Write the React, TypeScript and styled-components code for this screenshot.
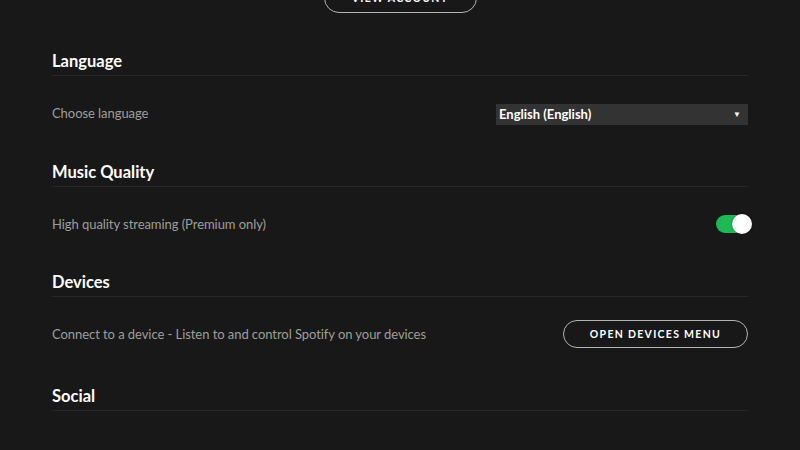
import React from "react";
import styled, { createGlobalStyle } from "styled-components";

const Global = createGlobalStyle`
  html, body { margin: 0; padding: 0; background: #181818; }
  body { font-family: Lato, "Noto Sans", "Liberation Sans", sans-serif; overflow: hidden; }
  * { box-sizing: border-box; }
`;

const Page = styled.div`
  width: 800px;
  height: 450px;
  background: #181818;
  padding: 0 52px;
  overflow: hidden;
`;

const Top = styled.div`
  display: flex;
  justify-content: center;
  margin-top: -17px;
  margin-bottom: 38px;
`;

const PillButton = styled.button<{ $w: number; $h: number }>`
  width: ${(p) => p.$w}px;
  height: ${(p) => p.$h}px;
  border-radius: ${(p) => p.$h / 2}px;
  border: 1px solid #b3b3b3;
  background: transparent;
  color: #fff;
  font-family: Lato, "Liberation Sans", sans-serif;
  font-weight: 700;
  font-size: 10.5px;
  letter-spacing: 1.3px;
  text-transform: uppercase;
  display: flex;
  align-items: center;
  justify-content: center;
  padding: 0;
`;

const Section = styled.section<{ $after: number }>`
  display: flex;
  flex-direction: column;
  margin-bottom: ${(p) => p.$after}px;
`;

const Heading = styled.h2`
  margin: 0;
  font-size: 16.5px;
  line-height: 20px;
  font-weight: 700;
  color: #fff;
  padding-bottom: 4px;
  border-bottom: 1px solid #282828;
`;

const Row = styled.div`
  display: flex;
  align-items: center;
  justify-content: space-between;
  min-height: 28px;
  margin-top: 23px;
`;

const Label = styled.span`
  font-size: 13px;
  letter-spacing: -0.06px;
  color: #9e9e9e;
`;

const Select = styled.div`
  width: 252px;
  height: 21px;
  margin-top: 2px;
  background: #333;
  display: flex;
  align-items: center;
  justify-content: space-between;
  padding: 0 7px 0 3px;
  color: #fff;
  font-size: 13px;
  font-weight: 700;
`;

const Arrow = styled.span`
  font-size: 8px;
  color: #fff;
`;

const Toggle = styled.div<{ $on: boolean }>`
  position: relative;
  width: 35px;
  height: 18px;
  border-radius: 9px;
  background: ${(p) => (p.$on ? "#1db954" : "#535353")};
  margin-right: -3px;
`;

const Knob = styled.div<{ $on: boolean }>`
  position: absolute;
  top: -1px;
  ${(p) => (p.$on ? "right: -1px;" : "left: -1px;")}
  width: 20px;
  height: 20px;
  border-radius: 50%;
  background: #fff;
  box-shadow: 0 0 2px rgba(0,0,0,0.4);
`;

export default function App() {
  return (
    <>
      <Global />
      <Page>
        <Top>
          <PillButton $w={153} $h={30}>View Account</PillButton>
        </Top>
        <Section $after={35}>
          <Heading>Language</Heading>
          <Row>
            <Label>Choose language</Label>
            <Select>
              <span>English (English)</span>
              <Arrow>▼</Arrow>
            </Select>
          </Row>
        </Section>
        <Section $after={34}>
          <Heading>Music Quality</Heading>
          <Row>
            <Label>High quality streaming (Premium only)</Label>
            <Toggle $on>
              <Knob $on />
            </Toggle>
          </Row>
        </Section>
        <Section $after={38}>
          <Heading>Devices</Heading>
          <Row>
            <Label>Connect to a device - Listen to and control Spotify on your devices</Label>
            <PillButton $w={185} $h={28}>Open Devices Menu</PillButton>
          </Row>
        </Section>
        <Section $after={0}>
          <Heading>Social</Heading>
        </Section>
      </Page>
    </>
  );
}
